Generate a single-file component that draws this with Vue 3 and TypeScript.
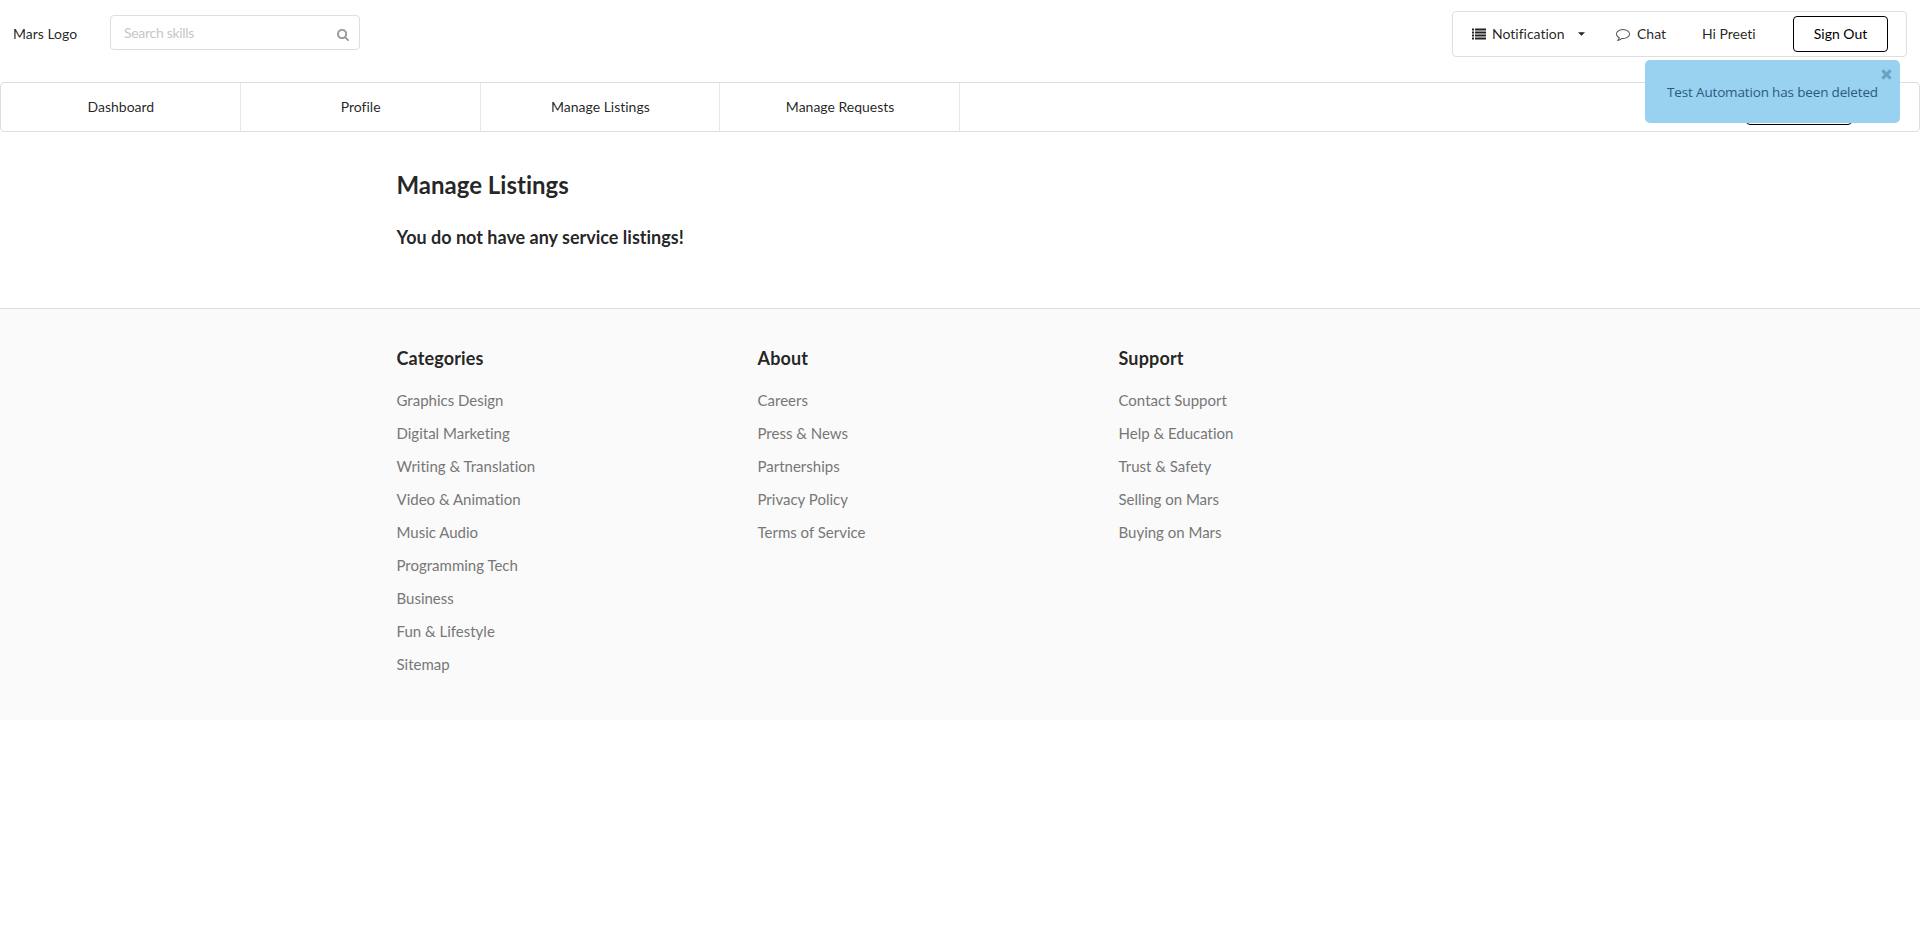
<script setup lang="ts">
interface LinkGroup {
  title: string
  links: string[]
}

const sections: string[] = ['Dashboard', 'Profile', 'Manage Listings', 'Manage Requests']

const groups: LinkGroup[] = [
  {
    title: 'Categories',
    links: [
      'Graphics Design',
      'Digital Marketing',
      'Writing & Translation',
      'Video & Animation',
      'Music Audio',
      'Programming Tech',
      'Business',
      'Fun & Lifestyle',
      'Sitemap',
    ],
  },
  {
    title: 'About',
    links: ['Careers', 'Press & News', 'Partnerships', 'Privacy Policy', 'Terms of Service'],
  },
  {
    title: 'Support',
    links: ['Contact Support', 'Help & Education', 'Trust & Safety', 'Selling on Mars', 'Buying on Mars'],
  },
]
</script>

<template>
  <div class="page">
    <header class="topbar">
      <span class="logo">Mars Logo</span>
      <div class="search">
        <input class="search-input" type="text" placeholder="Search skills" />
        <svg class="search-icon" viewBox="0 0 1664 1792" width="12" height="13">
          <path
            d="M1152 832q0-185-131.500-316.500t-316.500-131.500-316.500 131.500-131.500 316.500 131.500 316.500 316.500 131.500 316.500-131.500 131.500-316.500zm512 832q0 52-38 90t-90 38q-54 0-90-38l-343-342q-179 124-399 124-143 0-273.500-55.500t-225-150-150-225-55.500-273.500 55.500-273.500 150-225 225-150 273.500-55.500 273.500 55.500 225 150 150 225 55.500 273.500q0 220-124 399l343 343q37 37 37 90z"
          />
        </svg>
      </div>
      <div class="account">
        <div class="entry notification">
          <svg class="list-icon" viewBox="0 0 14 12" width="14" height="12">
            <path d="M0 .5h2v2H0zM3 .5h11v2H3zM0 3.500h2v2H0zM3 3.500h11v2H3zM0 6.500h2v2H0zM3 6.500h11v2H3zM0 9.500h2v2H0zM3 9.500h11v2H3z" />
          </svg>
          <span>Notification</span>
          <svg class="caret" viewBox="0 0 8 4" width="7" height="4"><path d="M0 0h8L4 4z" /></svg>
        </div>
        <div class="entry chat">
          <svg class="chat-icon" viewBox="0 0 1792 1792" width="14" height="14">
            <path
              d="M896 384q-204 0-381.500 69.500t-282 187.500-104.500 255q0 112 71.500 213.500t201.500 175.500l87 50-27 96q-24 91-70 172 152-63 275-171l43-38 57 6q69 8 130 8 204 0 381.500-69.500t282-187.500 104.500-255-104.500-255-282-187.500-381.500-69.500zm896 512q0 174-120 321.500t-326 233-450 85.500q-70 0-145-8-198 175-460 242-49 14-114 22h-5q-15 0-27-10.500t-16-27.500v-1q-3-4-.5-12t2-10 4.500-9.500l6-9 7-8.500 8-9q7-8 31-34.500t34.500-38 31-39.500 32.500-51 27-59 26-76q-157-89-247.500-220t-90.500-281q0-174 120-321.500t326-233 450-85.500 450 85.500 326 233 120 321.500z"
            />
          </svg>
          <span>Chat</span>
        </div>
        <span class="entry greeting">Hi Preeti</span>
        <button class="sign-out" type="button">Sign Out</button>
      </div>
    </header>

    <nav class="sections">
      <a v-for="name in sections" :key="name" class="section">{{ name }}</a>
      <span class="share"></span>
    </nav>

    <main class="content">
      <h2 class="title">Manage Listings</h2>
      <h3 class="empty">You do not have any service listings!</h3>
    </main>

    <footer class="footer">
      <div class="groups">
        <section v-for="group in groups" :key="group.title" class="group">
          <h3 class="group-title">{{ group.title }}</h3>
          <a v-for="link in group.links" :key="link" class="link">{{ link }}</a>
        </section>
      </div>
    </footer>

    <div class="toast">
      <span>Test Automation has been deleted</span>
      <svg class="toast-close" viewBox="0 0 10 10" width="11" height="11">
        <path d="M1.300 1.300l7.400 7.400M8.700 1.300L1.300 8.700" />
      </svg>
    </div>
  </div>
</template>

<style>
body {
  background: #fff;
}
</style>

<style scoped>
.page {
  position: relative;
  min-height: 925px;
  box-sizing: border-box;
  font-family: Lato, 'Liberation Sans', sans-serif;
  font-size: 14px;
  line-height: 20px;
  font-variant-ligatures: none;
  color: rgba(0, 0, 0, 0.87);
}
.page *,
.page *::before {
  box-sizing: border-box;
}
.topbar {
  display: flex;
  align-items: flex-start;
  height: 82px;
  padding: 11px 13px 0;
}
.logo {
  width: 97px;
  padding-top: 13px;
}
.search {
  display: flex;
  align-items: center;
  width: 250px;
  height: 35px;
  margin-top: 4px;
  padding: 0 10px 0 13px;
  border: 1px solid #dededf;
  border-radius: 4px;
}
.search-input {
  flex: 1;
  min-width: 0;
  padding: 1px 0 0;
  border: 0;
  outline: 0;
  background: transparent;
  font: inherit;
  letter-spacing: -0.3px;
}
.search-input::placeholder {
  color: #c7c7c7;
}
.search-icon {
  margin-top: 4px;
  fill: #999;
}
.account {
  display: flex;
  align-items: center;
  width: 455px;
  height: 46px;
  margin-left: auto;
  padding: 0 18px 0 19px;
  border: 1px solid #dededf;
  border-radius: 4px;
}
.entry {
  display: flex;
  align-items: center;
}
.notification {
  width: 113px;
}
.list-icon {
  margin-right: 6px;
  fill: #222;
}
.caret {
  margin-left: auto;
  fill: #222;
}
.chat {
  width: 51px;
  margin-left: 31px;
}
.chat-icon {
  margin-right: 7px;
  fill: #555;
}
.greeting {
  margin-left: 35px;
}
.sign-out {
  width: 95px;
  height: 36px;
  margin-left: auto;
  padding: 0;
  border: 1px solid #000;
  border-radius: 4px;
  background: #fff;
  font: inherit;
  color: #000;
}
.sections {
  display: flex;
  height: 50px;
  border: 1px solid #dededf;
  border-radius: 4px;
}
.section {
  display: flex;
  align-items: center;
  justify-content: center;
  width: 239.750px;
  padding-left: 1px;
  border-right: 1px solid #e8e8e9;
}
.share {
  width: 106px;
  height: 36px;
  margin: 6px 67px 0 auto;
  border: 1px solid #000;
  border-radius: 4px;
}
.content {
  width: 1127px;
  height: 176px;
  margin: 0 auto;
  padding-top: 37px;
}
.title {
  margin: 0;
  font-size: 24px;
  line-height: 32px;
  font-weight: 700;
}
.empty {
  margin: 24px 0 0;
  font-size: 18px;
  line-height: 24px;
  font-weight: 700;
}
.footer {
  height: 412px;
  border-top: 1px solid #dededf;
  background: #fafafa;
}
.groups {
  display: grid;
  grid-template-columns: repeat(3, 361px);
  width: 1127px;
  margin: 0 auto;
  padding-top: 37px;
}
.group {
  display: flex;
  flex-direction: column;
}
.group-title {
  margin: 0 0 14px;
  font-size: 18px;
  line-height: 24px;
  font-weight: 700;
  letter-spacing: 0.15px;
}
.link {
  font-size: 15px;
  line-height: 33px;
  color: #777;
}
.toast {
  position: absolute;
  top: 60px;
  right: 20px;
  display: flex;
  align-items: center;
  justify-content: center;
  width: 255px;
  height: 63px;
  border-radius: 5px;
  background: #99d2f0;
  color: #2a5a7e;
  font-family: 'Open Sans', 'Noto Sans', sans-serif;
  font-size: 13.500px;
  letter-spacing: -0.16px;
}
.toast-close {
  position: absolute;
  top: 9px;
  right: 8px;
  fill: none;
  stroke: #68a3c4;
  stroke-width: 2.800;
}
</style>
